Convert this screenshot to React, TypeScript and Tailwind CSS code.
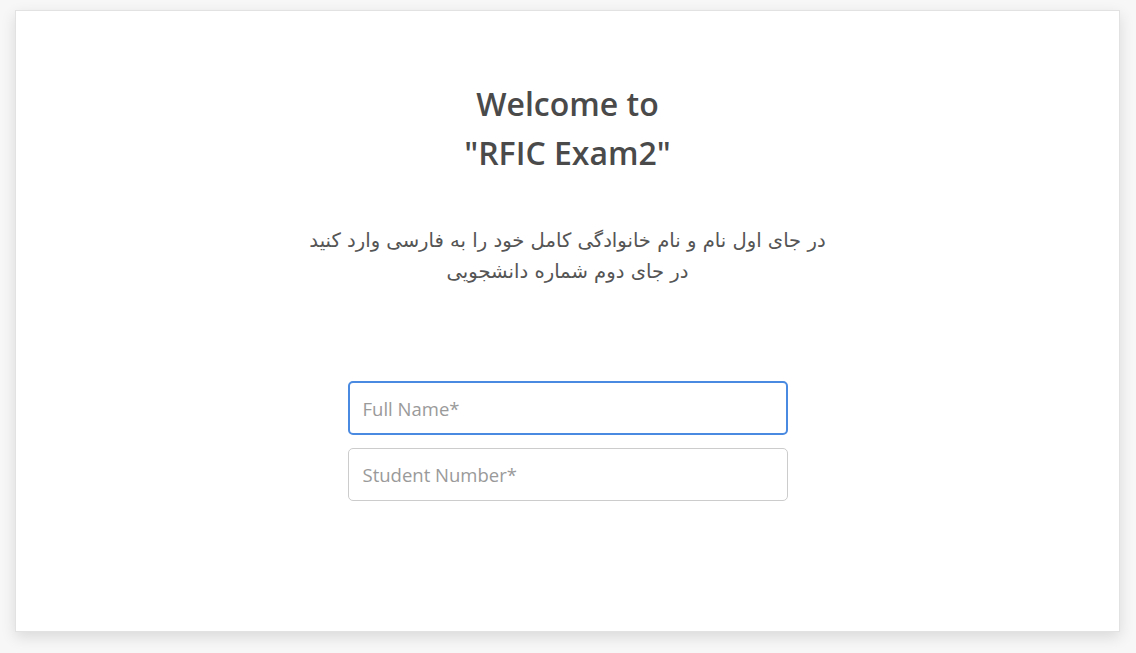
import React from "react";

export default function App() {
  return (
    <div className="w-[1136px] h-[653px] bg-[#f7f7f7] pl-[15px] pr-[16px] pt-[10px]" style={{ fontFamily: '"Open Sans", "DejaVu Sans", sans-serif' }}>
      <div className="h-[622px] bg-white border border-[#e2e2e2] shadow-[0_5px_14px_rgba(0,0,0,0.12)] flex flex-col items-center pt-[68px]">
        <h1 className="text-[32px] leading-[49px] font-semibold text-[#4a4a4a] text-center">
          Welcome to
          <br />
          "RFIC Exam2"
        </h1>
        <div dir="rtl" className="mt-[48px] text-[19.6px] leading-[31px] text-[#555555] text-center" style={{ fontFamily: '"DejaVu Sans", sans-serif' }}>
          <p>در جای اول نام و نام خانوادگی کامل خود را به فارسی وارد کنید</p>
          <p>در جای دوم شماره دانشجویی</p>
        </div>
        <div className="mt-[94px] w-[440px] flex flex-col gap-[13px]">
          <input
            autoFocus
            placeholder="Full Name*"
            className="h-[54px] w-full rounded-[5px] border-2 border-[#4a8ae0] px-[13px] text-[18.5px] text-[#333] placeholder:text-[#9a9a9a] outline-none"
          />
          <input
            placeholder="Student Number*"
            className="h-[53px] w-full rounded-[5px] border border-[#cccccc] px-[14px] text-[18.5px] text-[#333] placeholder:text-[#9a9a9a] outline-none"
          />
        </div>
      </div>
    </div>
  );
}
